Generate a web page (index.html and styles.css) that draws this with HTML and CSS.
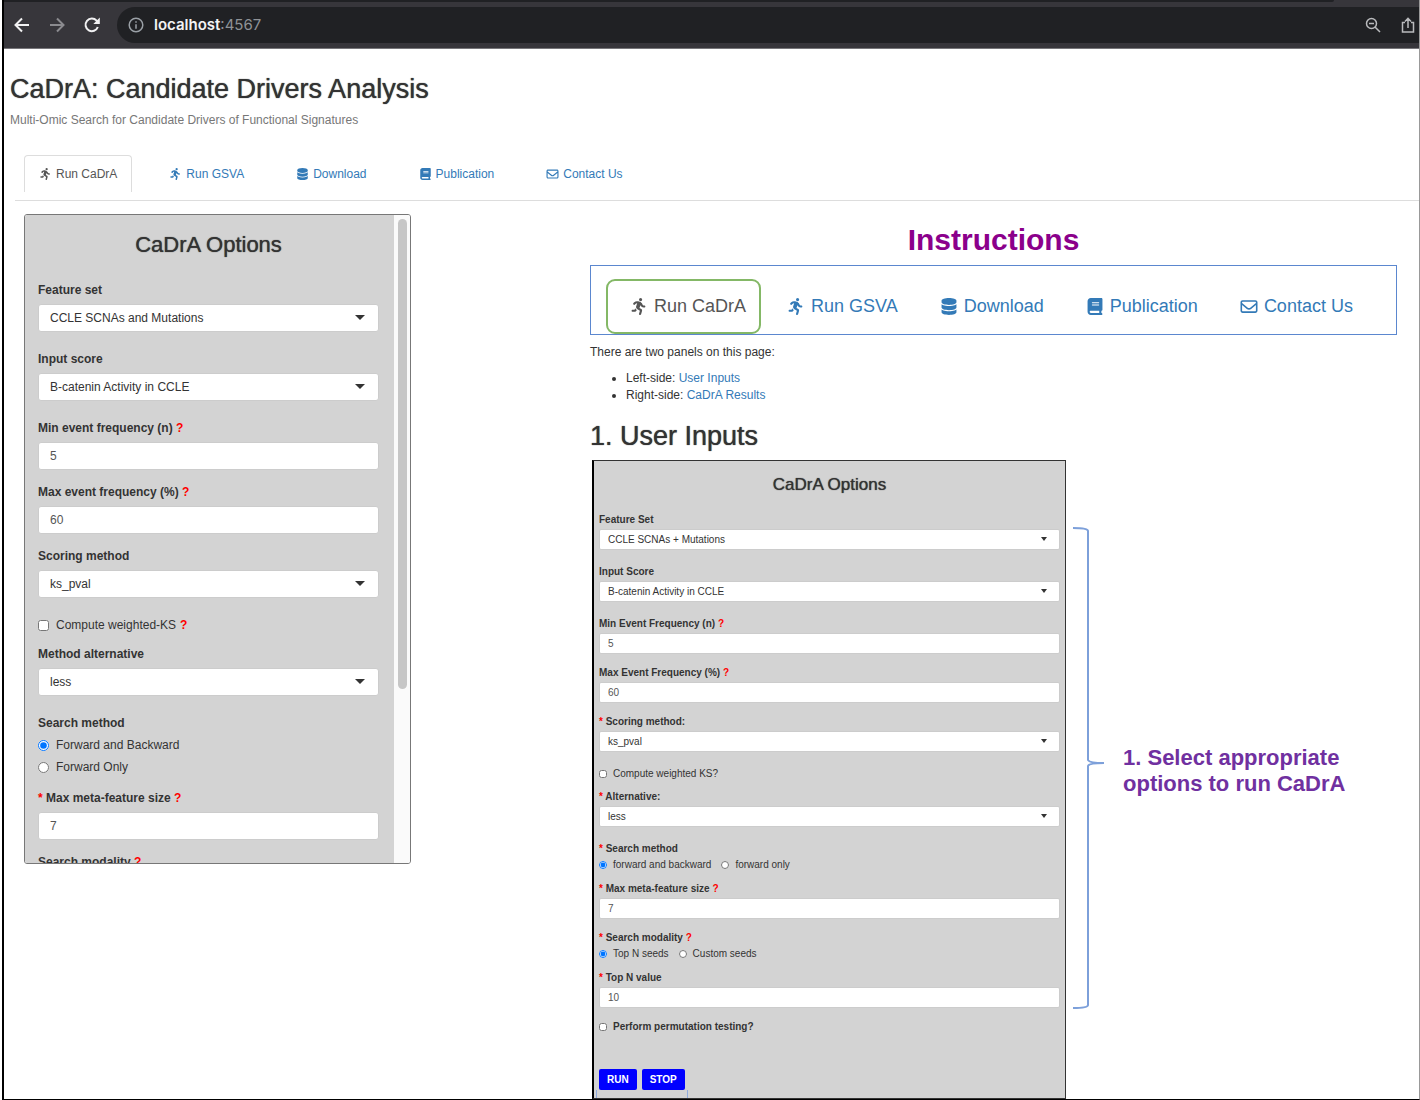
FILE: index.html
```html
<!DOCTYPE html>
<html lang="en">
<head>
<meta charset="utf-8">
<title>CaDrA: Candidate Drivers Analysis</title>
<link rel="stylesheet" href="styles.css">
</head>
<body>
<svg class="sprite" aria-hidden="true">
  <symbol id="i-run" viewBox="0 0 448 512"><path d="M320 48a48 48 0 1 0 -96 0 48 48 0 1 0 96 0zM125.7 175.5c9.9-9.9 23.4-15.5 37.5-15.5c1.9 0 3.8 .1 5.6 .3L137.6 254c-9.3 28 1.7 58.8 26.8 74.5l86.2 53.9-25.4 88.8c-4.9 17 5 34.7 22 39.6s34.7-5 39.6-22l28.7-100.4c5.9-20.6-2.6-42.6-20.7-53.9L238 299l30.9-82.4 5.1 12.3C289 264.7 323.9 288 362.7 288H384c17.7 0 32-14.3 32-32s-14.3-32-32-32H362.7c-12.9 0-24.6-7.8-29.5-19.7l-6.3-15c-14.6-35.1-44.1-61.9-80.5-73.1l-48.7-15c-11.1-3.4-22.7-5.2-34.4-5.2c-31 0-60.8 12.3-82.7 34.3L57.4 153.4c-12.5 12.5-12.5 32.8 0 45.3s32.8 12.5 45.3 0l23.1-23.1zM91.2 352H32c-17.7 0-32 14.3-32 32s14.3 32 32 32h69.6c19 0 36.2-11.2 43.9-28.5L157 361.6l-9.5-6c-17.5-10.9-30.5-26.8-37.9-44.9L91.2 352z"/></symbol>
  <symbol id="i-data" viewBox="0 0 448 512"><path d="M448 80v48c0 44.2-100.3 80-224 80S0 172.2 0 128V80C0 35.8 100.3 0 224 0S448 35.8 448 80zM393.2 214.7c20.8-7.4 39.9-16.9 54.8-28.6V288c0 44.2-100.3 80-224 80S0 332.2 0 288V186.1c14.9 11.8 34 21.2 54.8 28.6C99.7 230.7 159.5 240 224 240s124.3-9.3 169.2-25.3zM0 346.1c14.9 11.8 34 21.2 54.8 28.6C99.7 390.7 159.5 400 224 400s124.3-9.3 169.2-25.3c20.8-7.4 39.9-16.9 54.8-28.6V432c0 44.2-100.3 80-224 80S0 476.2 0 432V346.1z"/></symbol>
  <symbol id="i-book" viewBox="0 0 448 512"><path d="M96 0C43 0 0 43 0 96V416c0 53 43 96 96 96H384h32c17.7 0 32-14.3 32-32s-14.3-32-32-32V384c17.7 0 32-14.3 32-32V32c0-17.7-14.3-32-32-32H384 96zm0 384H352v64H96c-17.7 0-32-14.3-32-32s14.3-32 32-32zm32-240c0-8.8 7.2-16 16-16H336c8.8 0 16 7.2 16 16s-7.2 16-16 16H144c-8.8 0-16-7.2-16-16zm16 48H336c8.8 0 16 7.2 16 16s-7.2 16-16 16H144c-8.8 0-16-7.2-16-16s7.2-16 16-16z"/></symbol>
  <symbol id="i-mail" viewBox="0 0 512 512"><path d="M64 112c-8.8 0-16 7.2-16 16v22.1L220.5 291.7c20.7 17 50.4 17 71.1 0L464 150.1V128c0-8.8-7.2-16-16-16H64zM48 212.2V384c0 8.8 7.2 16 16 16H448c8.8 0 16-7.2 16-16V212.2L322 328.8c-38.4 31.5-93.7 31.5-132 0L48 212.2zM0 128C0 92.7 28.7 64 64 64H448c35.3 0 64 28.7 64 64V384c0 35.3-28.7 64-64 64H64c-35.3 0-64-28.7-64-64V128z"/></symbol>
</svg>

<div class="window">
  <div class="tabstrip"><div class="tabstrip-fill"></div></div>
  <div class="toolbar">
    <div class="nav-buttons">
      <button type="button" class="nav-btn" aria-label="Back"><svg viewBox="0 0 16 16"><path d="M15 8H2M8 1.500L1.500 8L8 14.500" /></svg></button>
      <button type="button" class="nav-btn dim" aria-label="Forward"><svg viewBox="0 0 16 16"><path d="M1 8H14M8 1.500L14.500 8L8 14.500" /></svg></button>
      <button type="button" class="nav-btn" aria-label="Reload"><svg viewBox="0 0 16 16"><path d="M13.800 10A6.300 6.300 0 1 1 12.600 3.700L14 5" /><path class="solid" d="M15.800 0.500V7H9.300Z" /></svg></button>
    </div>
    <div class="address">
      <svg class="info" viewBox="0 0 16 16"><circle cx="8" cy="8" r="6.800"/><path d="M8 7.200V11.800M8 4.200V5.800"/></svg>
      <div class="url"><span class="host">localhost</span>:4567</div>
      <svg class="tool" viewBox="0 0 16 16"><circle cx="6.500" cy="6.500" r="5"/><path d="M4 6.500H9M10 10L15 15"/></svg>
      <svg class="tool" viewBox="0 0 16 16"><path d="M5 5.500H2.500V15H13.500V5.500H11M8 11V2M5 4.500L8 1.300L11 4.500"/></svg>
    </div>
  </div>

  <header class="masthead">
    <h1>CaDrA: Candidate Drivers Analysis</h1>
    <p>Multi-Omic Search for Candidate Drivers of Functional Signatures</p>
  </header>

  <nav class="tabs">
    <a class="tab active" href="#run"><svg><use href="#i-run"/></svg>Run CaDrA</a>
    <a class="tab" href="#gsva"><svg><use href="#i-run"/></svg>Run GSVA</a>
    <a class="tab" href="#download"><svg><use href="#i-data"/></svg>Download</a>
    <a class="tab" href="#publication"><svg><use href="#i-book"/></svg>Publication</a>
    <a class="tab" href="#contact"><svg><use href="#i-mail"/></svg>Contact Us</a>
  </nav>

  <div class="columns">
    <aside class="options">
      <form class="form">
        <h3>CaDrA Options</h3>
        <div class="field wide"><label for="fs">Feature set</label>
          <div class="pick"><select id="fs"><option>CCLE SCNAs and Mutations</option></select></div></div>
        <div class="field wide"><label for="sc">Input score</label>
          <div class="pick"><select id="sc"><option>B-catenin Activity in CCLE</option></select></div></div>
        <div class="field"><label for="mn">Min event frequency (n) <b>?</b></label>
          <input class="text" id="mn" type="text" value="5"></div>
        <div class="field"><label for="mx">Max event frequency (%) <b>?</b></label>
          <input class="text" id="mx" type="text" value="60"></div>
        <div class="field wide"><label for="sm">Scoring method</label>
          <div class="pick"><select id="sm"><option>ks_pval</option></select></div></div>
        <label class="choice lone"><input type="checkbox">Compute weighted-KS <b>?</b></label>
        <div class="field wide"><label for="al">Method alternative</label>
          <div class="pick"><select id="al"><option>less</option></select></div></div>
        <fieldset class="field">
          <legend>Search method</legend>
          <div class="choices stacked">
            <label class="choice"><input type="radio" name="dir" checked>Forward and Backward</label>
            <label class="choice"><input type="radio" name="dir">Forward Only</label>
          </div>
        </fieldset>
        <div class="field"><label for="mf"><b>*</b> Max meta-feature size <b>?</b></label>
          <input class="text" id="mf" type="text" value="7"></div>
        <div class="field"><p class="caption">Search modality <b>?</b></p></div>
      </form>
      <div class="rail"><div class="thumb"></div></div>
    </aside>

    <main class="guide">
      <h2 class="title">Instructions</h2>
      <nav class="demo-tabs">
        <a class="demo-tab active" href="#run"><svg><use href="#i-run"/></svg>Run CaDrA</a>
        <a class="demo-tab" href="#gsva"><svg><use href="#i-run"/></svg>Run GSVA</a>
        <a class="demo-tab" href="#download"><svg><use href="#i-data"/></svg>Download</a>
        <a class="demo-tab" href="#publication"><svg><use href="#i-book"/></svg>Publication</a>
        <a class="demo-tab" href="#contact"><svg><use href="#i-mail"/></svg>Contact Us</a>
      </nav>
      <p class="intro">There are two panels on this page:</p>
      <ul class="panels">
        <li>Left-side: <a href="#inputs">User Inputs</a></li>
        <li>Right-side: <a href="#results">CaDrA Results</a></li>
      </ul>
      <h2 class="section" id="inputs">1. User Inputs</h2>

      <div class="figure">
        <form class="form mini">
          <h3>CaDrA Options</h3>
          <div class="field wide"><label for="d-fs">Feature Set</label>
            <div class="pick"><select id="d-fs"><option>CCLE SCNAs + Mutations</option></select></div></div>
          <div class="field wide"><label for="d-sc">Input Score</label>
            <div class="pick"><select id="d-sc"><option>B-catenin Activity in CCLE</option></select></div></div>
          <div class="field"><label for="d-mn">Min Event Frequency (n) <b>?</b></label>
            <input class="text" id="d-mn" type="text" value="5"></div>
          <div class="field"><label for="d-mx">Max Event Frequency (%) <b>?</b></label>
            <input class="text" id="d-mx" type="text" value="60"></div>
          <div class="field wide"><label for="d-sm"><b>*</b> Scoring method:</label>
            <div class="pick"><select id="d-sm"><option>ks_pval</option></select></div></div>
          <label class="choice lone"><input type="checkbox">Compute weighted KS?</label>
          <div class="field wide"><label for="d-al"><b>*</b> Alternative:</label>
            <div class="pick"><select id="d-al"><option>less</option></select></div></div>
          <fieldset class="field">
            <legend><b>*</b> Search method</legend>
            <div class="choices">
              <label class="choice"><input type="radio" name="d-dir" checked>forward and backward</label>
              <label class="choice"><input type="radio" name="d-dir">forward only</label>
            </div>
          </fieldset>
          <div class="field"><label for="d-mf"><b>*</b> Max meta-feature size <b>?</b></label>
            <input class="text" id="d-mf" type="text" value="7"></div>
          <fieldset class="field">
            <legend><b>*</b> Search modality <b>?</b></legend>
            <div class="choices">
              <label class="choice"><input type="radio" name="d-mod" checked>Top N seeds</label>
              <label class="choice"><input type="radio" name="d-mod">Custom seeds</label>
            </div>
          </fieldset>
          <div class="field"><label for="d-tn"><b>*</b> Top N value</label>
            <input class="text" id="d-tn" type="text" value="10"></div>
          <label class="choice strong"><input type="checkbox">Perform permutation testing?</label>
          <div class="actions">
            <button type="button">RUN</button>
            <button type="button">STOP</button>
          </div>
          <div class="under-brace"></div>
        </form>
        <svg class="brace" viewBox="0 0 32 482"><path d="M0 1Q15 1 15 4V233Q16 236 31 236Q16 236 15 239V478Q15 481 0 481"/></svg>
        <p class="note">1. Select appropriate<br>options to run CaDrA</p>
      </div>
    </main>
  </div>
</div>
</body>
</html>
```
FILE: styles.css
```css
* { box-sizing: border-box; }

body {
  margin: 0;
  background: #fff;
  color: #333;
  font: 12px/17px "Liberation Sans", Arial, sans-serif;
}

h1, h2, h3, p, ul, fieldset { margin: 0; padding: 0; }
h1, h3, .section { font-weight: 500; text-shadow: 0 0 1px currentColor; }
a { color: #337ab7; text-decoration: none; }
.sprite { display: none; }

.window {
  min-height: 100vh;
  margin-left: 2px;
  border: solid #000;
  border-width: 0 1px 1px 2px;
  border-right-color: #999;
}

/* browser chrome */
.tabstrip { height: 2px; background: #37363b; }
.tabstrip-fill {
  width: 94%;
  height: 2px;
  background: #202124;
  border-bottom-right-radius: 2px;
}
.toolbar {
  display: flex;
  gap: 17px;
  padding: 5px 0 5px 10px;
  background: #37363b;
  border-bottom: 1px solid #77767a;
}
.nav-buttons { display: flex; align-items: center; gap: 19px; }
.nav-btn {
  width: 16px;
  height: 16px;
  padding: 0;
  border: 0;
  background: none;
  color: #f1f1f2;
}
.nav-btn.dim { color: #8b8b8f; }
.nav-btn svg { display: block; width: 16px; height: 16px; fill: none; stroke: currentColor; stroke-width: 2; }
.nav-btn .solid { fill: currentColor; stroke: none; }
.address {
  display: flex;
  flex: 1;
  align-items: center;
  height: 36px;
  padding: 0 3px 0 11px;
  border-radius: 18px 0 0 18px;
  background: #202124;
}
.info { width: 16px; height: 16px; fill: none; stroke: #9aa0a6; stroke-width: 1.5; }
.url { flex: 1; margin-left: 10px; color: #8f9296; font: 15px/20px Inter, Roboto, sans-serif; }
.host { color: #f3f3f4; font-weight: 600; }
.tool { width: 16px; height: 16px; margin-left: 19px; fill: none; stroke: #b9babd; stroke-width: 1.5; }

/* page header */
.masthead { padding: 25px 6px 0; }
.masthead h1 { font-size: 27px; line-height: 30px; }
.masthead p { margin-top: 7px; color: #777; line-height: 18px; }

.tabs {
  display: flex;
  flex-wrap: wrap;
  gap: 22px;
  margin: 26px 0 0 11px;
  padding: 0 9px 8px;
  border-bottom: 1px solid #ddd;
}
.tab {
  display: flex;
  align-items: center;
  height: 37px;
  padding: 0 14px;
  border: 1px solid transparent;
  border-bottom: 0;
}
.tab svg { width: 13px; height: 12px; margin-right: 4px; fill: currentColor; }
.tab.active { border-color: #ddd; border-radius: 4px 4px 0 0; color: #555; }

.columns {
  display: grid;
  grid-template-columns: 387fr 807fr;
  column-gap: 179px;
  align-items: start;
  padding: 13px 22px 0 20px;
}

/* options form, shared by the side panel and the walkthrough figure */
.options {
  display: flex;
  height: 650px;
  border: 1px solid #777;
  border-radius: 3px;
  overflow: hidden;
}
.form { background: #d3d3d3; }
.options .form {
  flex: 1;
  padding: 0 15px 0 13px;
  overflow-y: auto;
  scrollbar-width: none;
}
.form h3 { padding: 17px 0 24px; font-size: 22px; line-height: 26px; text-align: center; }
.form b { color: #f00; }
.field { margin: 0 0 14px; border: 0; min-width: 0; }
.field.wide { margin-bottom: 19px; }
.field > label, .field > legend, .caption {
  display: block;
  padding: 0 0 5px;
  font-weight: 700;
}
.pick { position: relative; }
.pick::after {
  content: "";
  position: absolute;
  top: 11px;
  right: 14px;
  border: solid transparent;
  border-width: 5px 5px 0;
  border-top-color: #333;
  pointer-events: none;
}
.pick select, .text {
  display: block;
  appearance: none;
  width: 100%;
  height: 28px;
  margin: 0;
  padding: 0 11px;
  border: 1px solid #ccc;
  border-radius: 3px;
  background: #fff;
  color: #333;
  font: inherit;
}
.text { color: #555; }
.choice { display: flex; align-items: center; gap: 7px; }
.choice input { width: 11px; height: 11px; margin: 0; }
.choice.lone { margin-bottom: 12px; }
.choice b { margin-left: -3px; }
.choices { display: flex; gap: 10px; }
.choices.stacked { flex-direction: column; gap: 5px; }
.rail { width: 16px; padding: 4px 3px 0 4px; background: #fafafa; }
.thumb { height: 73%; border-radius: 5px; background: #c6c6c6; }

/* instructions */
.guide { padding-top: 9px; }
.title { color: #8b008b; font-size: 30px; font-weight: 700; line-height: 34px; text-align: center; }
.demo-tabs {
  display: flex;
  gap: 26px;
  margin-top: 8px;
  padding: 13px 15px 0;
  border: 1px solid #5b87cf;
  font-size: 18px;
}
.demo-tab { display: flex; align-items: center; height: 55px; padding-right: 16px; }
.demo-tab svg { width: 18px; height: 17px; margin-right: 6px; fill: currentColor; }
.demo-tab.active {
  padding: 0 13px 0 22px;
  border: 2px solid #84b866;
  border-radius: 9px;
  color: #555;
}
.intro { margin-top: 9px; }
.panels { margin-top: 9px; padding-left: 36px; }
.section { margin-top: 17px; font-size: 27px; line-height: 30px; }

.figure { display: flex; align-items: flex-start; margin-top: 9px; padding-left: 2px; }
.mini {
  flex: 0 1 474px;
  padding: 0 5px;
  border: 1px solid #333;
  border-left: 2px solid #000;
  font-size: 10px;
  line-height: 13px;
}
.mini h3 { padding: 13px 0 17px; font-size: 17px; line-height: 22px; }
.mini .field { margin-bottom: 12px; }
.mini .field.wide { margin-bottom: 15px; }
.mini fieldset.field { margin-bottom: 11px; }
.mini .field > label, .mini .field > legend { padding-bottom: 3px; }
.mini .pick select, .mini .text { height: 21px; padding: 0 8px; border-radius: 2px; }
.mini .pick::after { top: 8px; right: 13px; border-width: 4px 3px 0; }
.mini .choice { gap: 6px; }
.mini .choice input { width: 8px; height: 8px; }
.mini .choice.lone { margin-bottom: 10px; }
.mini .choice.strong { font-weight: 700; }
.actions { display: flex; gap: 5px; margin-top: 36px; }
.actions button {
  height: 21px;
  padding: 0 8px;
  border: 0;
  border-radius: 2px;
  background: #00f;
  color: #fff;
  font: 700 10px/21px "Liberation Sans", Arial, sans-serif;
}
.under-brace { width: 92px; height: 8px; margin-left: -3px; border: solid #8faadc; border-width: 0 1px; }
.brace { flex: none; width: 32px; height: 482px; margin: 67px 0 0 7px; fill: none; stroke: #7da0da; stroke-width: 2; }
.note { margin: 285px 0 0 18px; color: #7030a0; font-size: 22px; font-weight: 700; line-height: 26px; }
```
